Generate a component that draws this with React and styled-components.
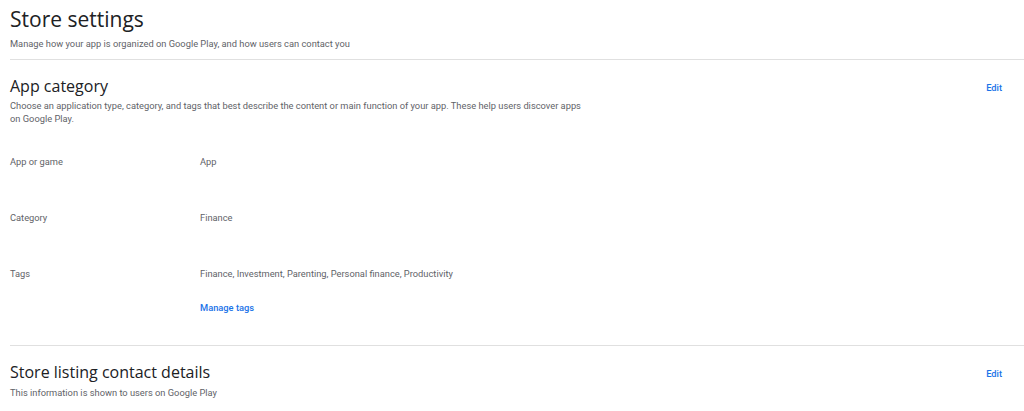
import React from "react";
import styled, { createGlobalStyle } from "styled-components";

const GlobalStyle = createGlobalStyle`
  body {
    margin: 0;
    background: #fff;
    font-family: Roboto, "Liberation Sans", Arial, sans-serif;
    color: #5f6368;
  }
`;

const Page = styled.div`
  padding-left: 10px;
  width: 1014px;
`;

const PageHeader = styled.header`
  padding-top: 5px;
  padding-bottom: 9px;
  border-bottom: 1px solid #e0e0e0;
`;

const PageTitle = styled.h1`
  margin: 0;
  font-family: "Open Sans", Roboto, sans-serif;
  font-weight: 400;
  font-size: 21px;
  line-height: 28px;
  color: #202124;
`;

const Subtitle = styled.p`
  margin: 4px 0 0;
  font-size: 9.3px;
  line-height: 13px;
`;

const Section = styled.section`
  padding: 15px 22px 0 0;
  border-bottom: ${p => (p.divided ? "1px solid #e0e0e0" : "none")};
  padding-bottom: ${p => (p.divided ? "31px" : "0")};
`;

const SectionHead = styled.div`
  display: flex;
  justify-content: space-between;
  align-items: flex-start;
`;

const HeadText = styled.div`
  max-width: 580px;
`;

const SectionTitle = styled.h2`
  margin: 0;
  font-family: "Open Sans", Roboto, sans-serif;
  font-weight: 400;
  font-size: 16px;
  line-height: 22px;
  color: #202124;
`;

const Description = styled.p`
  margin: ${p => p.gap || 2}px 0 0;
  font-size: 9.3px;
  line-height: 13px;
`;

const LinkButton = styled.a`
  font-size: 9.3px;
  font-weight: 500;
  color: #1a73e8;
  text-decoration: none;
  cursor: pointer;
  line-height: 13px;
  margin-top: ${p => p.top || 0}px;
`;

const Rows = styled.div`
  margin-top: 30px;
  display: grid;
  grid-template-columns: 190px 1fr;
  row-gap: 43px;
  font-size: 9.3px;
  line-height: 13px;
`;

const Label = styled.div`
  color: #5f6368;
`;

const Value = styled.div`
  display: flex;
  flex-direction: column;
  gap: 21px;
  color: #5f6368;
`;

const rows = [
  { label: "App or game", value: "App" },
  { label: "Category", value: "Finance" },
  {
    label: "Tags",
    value: "Finance, Investment, Parenting, Personal finance, Productivity",
    link: "Manage tags",
  },
];

export default function App() {
  return (
    <Page>
      <GlobalStyle />
      <PageHeader>
        <PageTitle>Store settings</PageTitle>
        <Subtitle>
          Manage how your app is organized on Google Play, and how users can contact you
        </Subtitle>
      </PageHeader>

      <Section divided>
        <SectionHead>
          <HeadText>
            <SectionTitle>App category</SectionTitle>
            <Description>
              Choose an application type, category, and tags that best describe the content or
              main function of your app. These help users discover apps on Google Play.
            </Description>
          </HeadText>
          <LinkButton top={6}>Edit</LinkButton>
        </SectionHead>
        <Rows>
          {rows.map(r => (
            <React.Fragment key={r.label}>
              <Label>{r.label}</Label>
              <Value>
                <span>{r.value}</span>
                {r.link && <LinkButton>{r.link}</LinkButton>}
              </Value>
            </React.Fragment>
          ))}
        </Rows>
      </Section>

      <Section>
        <SectionHead>
          <HeadText>
            <SectionTitle>Store listing contact details</SectionTitle>
            <Description gap={3}>This information is shown to users on Google Play</Description>
          </HeadText>
          <LinkButton top={6}>Edit</LinkButton>
        </SectionHead>
      </Section>
    </Page>
  );
}
